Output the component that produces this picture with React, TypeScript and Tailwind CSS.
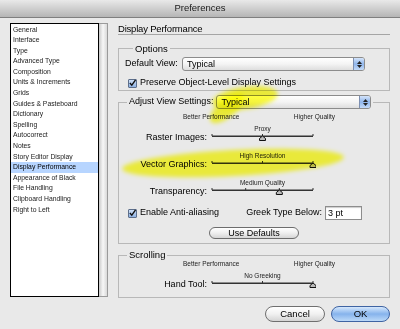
import React from "react"

const font = { fontFamily: '"Liberation Sans", Arial, sans-serif' }

const categories = [
  "General",
  "Interface",
  "Type",
  "Advanced Type",
  "Composition",
  "Units & Increments",
  "Grids",
  "Guides & Pasteboard",
  "Dictionary",
  "Spelling",
  "Autocorrect",
  "Notes",
  "Story Editor Display",
  "Display Performance",
  "Appearance of Black",
  "File Handling",
  "Clipboard Handling",
  "Right to Left",
]

function Checkbox() {
  return (
    <span className="w-[9px] h-[9px] border border-[#5d6f8c] rounded-[1px] bg-gradient-to-b from-[#cfe0f7] to-[#8fb2e3] flex items-center justify-center">
      <svg width="8" height="8" viewBox="0 0 8 8">
        <path d="M1 4 L3.2 6.5 L7.5 0.5" fill="none" stroke="#111" strokeWidth="1.6" />
      </svg>
    </span>
  )
}

function Select({ width, value }: { width: number; value: string }) {
  return (
    <div
      className="h-[14px] flex border border-[#8c8c8c] rounded-[3px] bg-gradient-to-b from-white via-[#f4f4f4] to-[#dedede] overflow-hidden"
      style={{ width }}
    >
      <span className="flex-1 pl-[4px] text-[9px] leading-[12px]">{value}</span>
      <span className="w-[11px] border-l border-[#7d8fb0] bg-gradient-to-b from-[#d4e4fa] via-[#90b6ec] to-[#c3daf8] flex flex-col items-center justify-center gap-[1px]">
        <svg width="5" height="3" viewBox="0 0 5 3"><path d="M0 3 L2.5 0 L5 3Z" fill="#222" /></svg>
        <svg width="5" height="3" viewBox="0 0 5 3"><path d="M0 0 L2.5 3 L5 0Z" fill="#222" /></svg>
      </span>
    </div>
  )
}

function Slider({ ticks, thumb }: { ticks: number; thumb: number }) {
  const w = 101
  const xs = Array.from({ length: ticks }, (_, i) => 3 + (w * i) / (ticks - 1))
  const tx = 3 + w * thumb
  return (
    <svg width={w + 6} height="8" viewBox={`0 0 ${w + 6} 8`} className="-ml-[3px]">
      <rect x="3" y="2.5" width={w} height="1.5" fill="#333" />
      {xs.map((x, i) => (
        <rect key={i} x={x - 0.5} y="1" width="1" height="2" fill="#333" />
      ))}
      <path
        d={`M${tx - 3} 7.5 L${tx - 3} 5.5 L${tx} 3 L${tx + 3} 5.5 L${tx + 3} 7.5 Z`}
        fill="#bbb"
        stroke="#111"
        strokeWidth="1"
      />
    </svg>
  )
}

function SliderRow({
  label,
  value,
  ticks,
  thumb,
  last,
}: {
  label: string
  value: string
  ticks: number
  thumb: number
  last?: boolean
}) {
  return (
    <div className={last ? "h-[16px]" : "h-[27px]"}>
      <div className="flex">
        <div className="w-[93px]" />
        <div className="w-[101px] text-center text-[6.5px] leading-[8px] text-[#222]">{value}</div>
      </div>
      <div className="flex items-center h-[8px]">
        <div className="w-[88px] text-right text-[9px] leading-[10px]">{label}</div>
        <div className="ml-[5px]">
          <Slider ticks={ticks} thumb={thumb} />
        </div>
      </div>
    </div>
  )
}

function Scale() {
  return (
    <div className="flex justify-between ml-[64px] w-[152px] text-[6.5px] leading-[8px] text-[#222]">
      <span>Better Performance</span>
      <span>Higher Quality</span>
    </div>
  )
}

export default function App() {
  return (
    <div className="w-[400px] h-[329px] bg-[#e9e9e9] text-black flex flex-col relative overflow-hidden" style={font}>
      {/* Title bar */}
      <div className="h-[18px] bg-gradient-to-b from-[#e9e9e9] via-[#cfcfcf] to-[#b5b5b5] border-b border-[#7f7f7f] flex items-center justify-center text-[9.5px] text-[#1a1a1a]">
        Preferences
      </div>

      <div className="flex pl-[10px] pt-[5px]">
        {/* Category list */}
        <div className="flex h-[274px]">
          <div className="w-[89px] bg-white border-[1.5px] border-black pt-[0.5px]">
            {categories.map((c) => (
              <div
                key={c}
                className={
                  "h-[10.6px] leading-[10.6px] pl-[2px] text-[6.8px] whitespace-nowrap " +
                  (c === "Display Performance" ? "bg-[#b7d5ff] text-black" : "text-[#222]")
                }
              >
                {c}
              </div>
            ))}
          </div>
          <div className="w-[9px] border-y border-r border-[#9a9a9a] bg-gradient-to-r from-[#c9c9c9] via-[#f7f7f7] to-[#d9d9d9]" />
        </div>

        {/* Right side */}
        <div className="ml-[10px] w-[272px]">
          <div className="h-[12px] leading-[11px] text-[9.5px] tracking-[-0.2px] border-b border-[#a5a5a5]">Display Performance</div>

          {/* Options */}
          <fieldset className="mt-[8px] border border-[#b8b8b8] pl-[6px] pb-[2px]">
            <legend className="ml-[8px] px-[2px] text-[9.5px] leading-[11px]">Options</legend>
            <div className="flex items-center mt-[3px]">
              <span className="text-[9px] w-[57px]">Default View:</span>
              <Select width={183} value="Typical" />
            </div>
            <div className="flex items-center gap-[3px] mt-[7px] ml-[3px] h-[10px]">
              <Checkbox />
              <span className="text-[9px]">Preserve Object-Level Display Settings</span>
            </div>
          </fieldset>

          {/* Adjust view settings */}
          <fieldset className="mt-[4px] border border-[#b8b8b8] pb-[4px]">
            <legend className="ml-[8px] px-[2px] flex items-center">
              <span className="text-[9px] mr-[3px]">Adjust View Settings:</span>
              <Select width={155} value="Typical" />
            </legend>
            <div className="pt-[4px]">
              <Scale />
            </div>
            <div className="mt-[4px]">
              <SliderRow label="Raster Images:" value="Proxy" ticks={3} thumb={0.5} />
              <SliderRow label="Vector Graphics:" value="High Resolution" ticks={3} thumb={1} />
              <SliderRow label="Transparency:" value="Medium Quality" ticks={4} thumb={2 / 3} />
            </div>
            <div className="flex items-center h-[14px]">
              <div className="flex items-center gap-[3px] ml-[9px]">
                <Checkbox />
                <span className="text-[9px]">Enable Anti-aliasing</span>
              </div>
              <span className="text-[9px] ml-auto mr-[3px]">Greek Type Below:</span>
              <div className="w-[37px] h-[14px] bg-white border border-[#8d8d8d] shadow-[inset_0_1px_1px_rgba(0,0,0,0.2)] text-[9px] leading-[12px] pl-[2px] mr-[27px]">
                3 pt
              </div>
            </div>
            <div className="flex justify-center mt-[7px]">
              <button className="w-[90px] h-[12px] rounded-full border border-[#6d6d6d] bg-gradient-to-b from-white via-[#efefef] to-[#d6d6d6] text-[9px] leading-[10px]">
                Use Defaults
              </button>
            </div>
          </fieldset>

          {/* Scrolling */}
          <fieldset className="mt-[6px] border border-[#b8b8b8] pb-[9px]">
            <legend className="ml-[8px] px-[2px] text-[9.5px] leading-[10px]">Scrolling</legend>
            <Scale />
            <div className="mt-[4px]">
              <SliderRow label="Hand Tool:" value="No Greeking" ticks={3} thumb={1} last />
            </div>
          </fieldset>
        </div>
      </div>

      {/* Dialog buttons */}
      <div className="flex justify-end gap-[6px] pr-[10px] mt-[8px]">
        <button className="w-[60px] h-[16px] rounded-full border border-[#6f6f6f] bg-gradient-to-b from-white via-[#f1f1f1] to-[#d4d4d4] text-[9.5px]">
          Cancel
        </button>
        <button className="w-[59px] h-[16px] rounded-full border border-[#3f64a3] bg-gradient-to-b from-[#d6e8fc] via-[#86b3ec] to-[#bcd9f8] text-[9.5px]">
          OK
        </button>
      </div>

      {/* Highlighter marks */}
      <div className="absolute left-[212px] top-[87px] w-[66px] h-[22px] rounded-[50%] bg-[#ffff2a] opacity-90 mix-blend-multiply blur-[2px] -rotate-[8deg]" />
      <div className="absolute left-[206px] top-[99px] w-[42px] h-[18px] rounded-[50%] bg-[#ffff2a] opacity-90 mix-blend-multiply blur-[2px] -rotate-[40deg]" />
      <div className="absolute left-[122px] top-[150px] w-[222px] h-[26px] rounded-[50%] bg-[#ffff2a] opacity-90 mix-blend-multiply blur-[2px] -rotate-[3deg]" />
    </div>
  )
}
